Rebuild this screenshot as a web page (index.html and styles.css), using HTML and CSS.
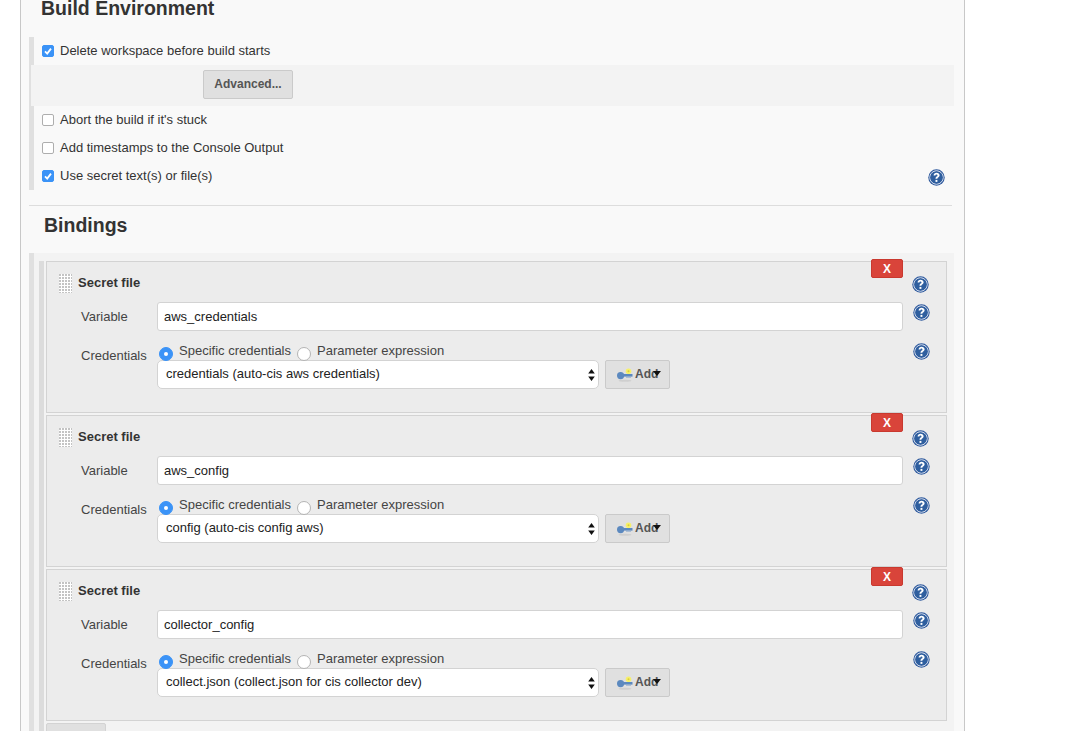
FILE: index.html
```html
<!DOCTYPE html>
<html lang="en">
<head>
<meta charset="utf-8">
<title>Build Environment</title>
<link rel="stylesheet" href="styles.css">
</head>
<body>
<svg class="defs" width="0" height="0" aria-hidden="true">
  <defs>
    <symbol id="help" viewBox="0 0 17 17">
      <circle cx="8.5" cy="8.5" r="8.2" fill="#2f5a9e"/>
      <circle cx="8.5" cy="8.5" r="6.7" fill="none" stroke="#e4eaf4" stroke-width="1"/>
      <circle cx="8.5" cy="8.5" r="6.1" fill="#2f5f9f"/>
      <path d="M5.6 6.4c0-1.7 1.3-2.7 3-2.7s3 1 3 2.5c0 1.1-.6 1.7-1.4 2.2-.6.4-.8.7-.8 1.4H7.5c0-1.1.3-1.7 1.1-2.2.6-.4.9-.7.9-1.2 0-.6-.4-.9-1-.9-.7 0-1.1.4-1.1 1.1H5.6z" fill="#fff"/>
      <rect x="7.5" y="10.9" width="1.9" height="2" fill="#fff"/>
    </symbol>
    <symbol id="key" viewBox="0 0 16 14">
      <ellipse cx="8" cy="12.8" rx="6.5" ry="1" fill="#cfcfcf"/>
      <circle cx="3.6" cy="7.6" r="3.6" fill="#5c89bf"/>
      <rect x="5" y="6" width="10.5" height="2.6" fill="#5c89bf"/>
      <rect x="9" y="8.4" width="5" height="1.2" fill="#8aa8cc"/>
      <circle cx="11.5" cy="3.2" r="2.8" fill="#f6f06a"/>
      <circle cx="11.5" cy="3.2" r="1" fill="#dccd3a"/>
    </symbol>
    <symbol id="arrows" viewBox="0 0 7 12">
      <path d="M3.5 0 6.8 4.6H.2zM3.5 12 .2 7.4h6.6z" fill="#111"/>
    </symbol>
    <symbol id="tick" viewBox="0 0 12 12">
      <path d="M3 6.3 5.2 8.6 9 3.6" fill="none" stroke="#fff" stroke-width="1.8"/>
    </symbol>
    <pattern id="dots" width="3" height="3" patternUnits="userSpaceOnUse">
      <rect width="2" height="2" fill="#c4c4c4"/>
    </pattern>
  </defs>
</svg>

<main class="panel">
  <h2 class="section-title">Build Environment</h2>

  <section class="options">
    <div class="check-row check-first">
      <span class="check on"><svg class="tick"><use href="#tick"/></svg></span>
      <span>Delete workspace before build starts</span>
    </div>
    <div class="advanced"><button class="btn btn-advanced" type="button">Advanced...</button></div>
    <div class="check-row check-after"><span class="check"></span><span>Abort the build if it's stuck</span></div>
    <div class="check-row"><span class="check"></span><span>Add timestamps to the Console Output</span></div>
    <div class="check-row">
      <span class="check on"><svg class="tick"><use href="#tick"/></svg></span>
      <span class="grow">Use secret text(s) or file(s)</span>
      <svg class="help help-secret"><use href="#help"/></svg>
    </div>
  </section>

  <hr class="rule">
  <h2 class="section-title bindings-title">Bindings</h2>

  <section class="bindings">
    <div class="bindings-inner">

      <article class="card">
        <button class="del" type="button">X</button>
        <div class="card-head">
          <svg class="grip" width="13" height="19"><rect width="13" height="19" fill="#fff"/><rect width="13" height="19" fill="url(#dots)"/></svg>
          <strong class="grow">Secret file</strong>
          <svg class="help"><use href="#help"/></svg>
        </div>
        <div class="row">
          <label class="lab">Variable</label>
          <input class="field" type="text" value="aws_credentials">
          <svg class="help"><use href="#help"/></svg>
        </div>
        <div class="row row-cred">
          <label class="lab lab-cred">Credentials</label>
          <div class="cred">
            <div class="radios">
              <span class="radio on"></span><span class="radio-text">Specific credentials</span>
              <span class="radio"></span><span class="radio-text">Parameter expression</span>
            </div>
            <div class="select-row">
              <div class="select"><span>credentials (auto-cis aws credentials)</span><svg class="arrows"><use href="#arrows"/></svg></div>
              <button class="btn btn-add" type="button"><svg class="key"><use href="#key"/></svg><span>Add</span><i class="caret"></i></button>
            </div>
          </div>
          <svg class="help"><use href="#help"/></svg>
        </div>
      </article>

      <article class="card">
        <button class="del" type="button">X</button>
        <div class="card-head">
          <svg class="grip" width="13" height="19"><rect width="13" height="19" fill="#fff"/><rect width="13" height="19" fill="url(#dots)"/></svg>
          <strong class="grow">Secret file</strong>
          <svg class="help"><use href="#help"/></svg>
        </div>
        <div class="row">
          <label class="lab">Variable</label>
          <input class="field" type="text" value="aws_config">
          <svg class="help"><use href="#help"/></svg>
        </div>
        <div class="row row-cred">
          <label class="lab lab-cred">Credentials</label>
          <div class="cred">
            <div class="radios">
              <span class="radio on"></span><span class="radio-text">Specific credentials</span>
              <span class="radio"></span><span class="radio-text">Parameter expression</span>
            </div>
            <div class="select-row">
              <div class="select"><span>config (auto-cis config aws)</span><svg class="arrows"><use href="#arrows"/></svg></div>
              <button class="btn btn-add" type="button"><svg class="key"><use href="#key"/></svg><span>Add</span><i class="caret"></i></button>
            </div>
          </div>
          <svg class="help"><use href="#help"/></svg>
        </div>
      </article>

      <article class="card">
        <button class="del" type="button">X</button>
        <div class="card-head">
          <svg class="grip" width="13" height="19"><rect width="13" height="19" fill="#fff"/><rect width="13" height="19" fill="url(#dots)"/></svg>
          <strong class="grow">Secret file</strong>
          <svg class="help"><use href="#help"/></svg>
        </div>
        <div class="row">
          <label class="lab">Variable</label>
          <input class="field" type="text" value="collector_config">
          <svg class="help"><use href="#help"/></svg>
        </div>
        <div class="row row-cred">
          <label class="lab lab-cred">Credentials</label>
          <div class="cred">
            <div class="radios">
              <span class="radio on"></span><span class="radio-text">Specific credentials</span>
              <span class="radio"></span><span class="radio-text">Parameter expression</span>
            </div>
            <div class="select-row">
              <div class="select"><span>collect.json (collect.json for cis collector dev)</span><svg class="arrows"><use href="#arrows"/></svg></div>
              <button class="btn btn-add" type="button"><svg class="key"><use href="#key"/></svg><span>Add</span><i class="caret"></i></button>
            </div>
          </div>
          <svg class="help"><use href="#help"/></svg>
        </div>
      </article>

      <div class="add-more"></div>
    </div>
  </section>
</main>
</body>
</html>
```

FILE: styles.css
```css
* { box-sizing: border-box; }

html, body {
  margin: 0;
  height: 731px;
  overflow: hidden;
  background: #fff;
}

body {
  font-family: "Liberation Sans", Arial, sans-serif;
  font-size: 13px;
  color: #333;
}

.defs { position: absolute; }

.panel {
  width: 945px;
  height: 731px;
  margin-left: 20px;
  padding: 0 11px 0 8px;
  overflow: hidden;
  background: #f9f9f9;
  border-left: 1px solid #c8c8c8;
  border-right: 1px solid #c8c8c8;
}

.section-title {
  margin: -2px 0 0;
  font-size: 19.5px;
  line-height: 20px;
  font-weight: 700;
  color: #333;
  padding-left: 12px;
  height: 39px;
}

.options {
  border-left: 5px solid #e0e0e0;
  height: 153px;
  width: 925px;
}

.check-row {
  display: flex;
  align-items: center;
  height: 28px;
  padding-left: 8px;
  gap: 6px;
}

.check-first { height: 26px; margin-bottom: 2px; }

.check-after { margin-top: -1px; }

.grow { flex: 1; }

.check {
  flex: none;
  width: 12px;
  height: 12px;
  margin-top: 1px;
  background: #fff;
  border: 1px solid #aeaeae;
  border-radius: 2px;
  display: block;
}

.check.on { background: #3b93f7; border-color: #3b93f7; position: relative; }

.tick { position: absolute; left: -1px; top: -1px; width: 12px; height: 12px; }

.advanced {
  height: 41px;
  margin-left: -3px;
  padding: 5px 0 0 172px;
  background: #f3f3f3;
}

.btn {
  font-family: inherit;
  font-weight: 700;
  font-size: 12px;
  color: #555;
  background: #e0e0e0;
  border: 1px solid #cacaca;
  border-radius: 2px;
  padding: 0 0 2px;
}

.btn-advanced { width: 90px; height: 29px; }

.help { flex: none; width: 17px; height: 17px; display: block; }

.help-secret { margin-right: 9px; margin-top: 5px; }

.rule {
  margin: 15px 0 0;
  border: 0;
  border-top: 1px solid #ddd;
  width: 923px;
}

.bindings-title {
  margin-top: 9px;
  padding-left: 15px;
  height: 39px;
}

.bindings {
  width: 925px;
  height: 500px;
  margin-top: -1px;
  padding-top: 8px;
  background: #f3f3f3;
  border-left: 5px solid #e0e0e0;
}

.bindings-inner {
  margin-left: 5px;
  border-left: 5px solid #dcdcdc;
  padding-left: 2px;
  width: 908px;
  display: flex;
  flex-direction: column;
  gap: 2px;
}

.card {
  position: relative;
  flex: none;
  width: 901px;
  height: 152px;
  background: #ececec;
  border: 1px solid #d3d3d3;
}

.del {
  position: absolute;
  left: 824px;
  top: -3px;
  width: 32px;
  height: 19px;
  padding: 0;
  font-family: inherit;
  font-size: 12px;
  font-weight: 700;
  color: #fff;
  background: #d9443a;
  border: 1px solid #c9392f;
  border-radius: 2px;
}

.card-head {
  display: flex;
  align-items: center;
  height: 19px;
  margin-top: 11px;
  padding-left: 12px;
  padding-right: 17px;
}

.card-head strong { margin-left: 6px; font-size: 13px; color: #333; }

.card-head .help { margin-top: 4px; }

.grip { flex: none; display: block; margin-top: 2px; }

.row {
  display: grid;
  grid-template-columns: 76px 746px 27px;
  padding-left: 34px;
  margin-top: 10px;
  height: 29px;
  align-items: start;
}

.row .help { margin-left: 10px; margin-top: 2px; }

.lab { line-height: 29px; color: #444; }

.field {
  width: 746px;
  height: 29px;
  padding: 0 8px 1px 6px;
  font-family: inherit;
  font-size: 13px;
  color: #222;
  background: #fff;
  border: 1px solid #d3d3d3;
  border-radius: 3px;
  outline: 0;
}

.row-cred { margin-top: 11px; height: 48px; }

.lab-cred { line-height: 28px; }

.cred { position: relative; width: 746px; }

.row-cred .help { margin-top: 1px; }

.radios {
  display: flex;
  align-items: flex-start;
  height: 18px;
  line-height: 18px;
  padding-left: 2px;
}

.radio {
  flex: none;
  width: 14px;
  height: 14px;
  margin-top: 5px;
  margin-right: 6px;
  background: #fff;
  border: 1px solid #b4b4b4;
  border-radius: 50%;
  position: relative;
  z-index: 1;
}

.radio.on { background: #3b93f7; border-color: #3b93f7; }

.radio.on::after {
  content: "";
  position: absolute;
  left: 4px;
  top: 4px;
  width: 4px;
  height: 4px;
  background: #fff;
  border-radius: 50%;
}

.radio-text { color: #444; margin-right: 6px; }

.select-row { display: flex; gap: 6px; }

.select {
  width: 442px;
  height: 29px;
  padding: 0 3px 2px 8px;
  display: flex;
  align-items: center;
  justify-content: space-between;
  color: #222;
  background: #fff;
  border: 1px solid #d3d3d3;
  border-radius: 5px;
}

.arrows { width: 7px; height: 12px; display: block; margin-top: 2px; }

.btn-add {
  position: relative;
  width: 65px;
  height: 29px;
  display: flex;
  align-items: center;
  padding-left: 11px;
  gap: 2px;
}

.key { width: 16px; height: 14px; display: block; flex: none; margin-top: 2px; }

.caret {
  position: absolute;
  left: 47px;
  top: 10px;
  width: 0;
  height: 0;
  border-left: 4px solid transparent;
  border-right: 4px solid transparent;
  border-top: 5px solid #111;
}

.add-more {
  flex: none;
  width: 60px;
  height: 30px;
  background: #e0e0e0;
  border: 1px solid #d3d3d3;
  border-radius: 2px;
}
```
